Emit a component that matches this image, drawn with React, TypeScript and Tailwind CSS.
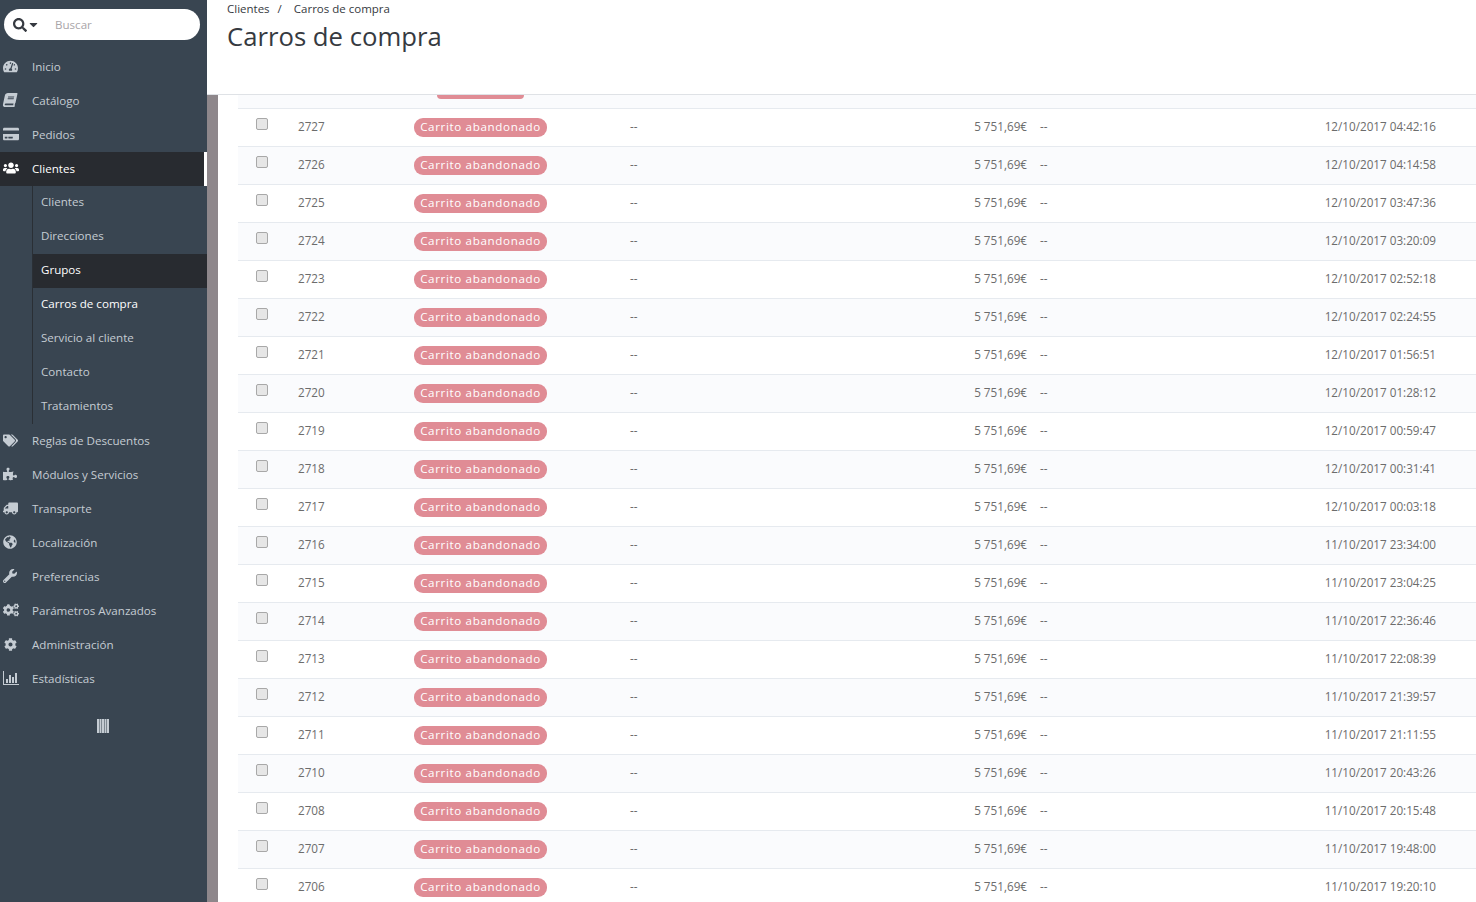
import {
  FaTachometerAlt,
  FaBook,
  FaCreditCard,
  FaUsers,
  FaTags,
  FaPuzzlePiece,
  FaTruck,
  FaGlobeAmericas,
  FaWrench,
  FaCogs,
  FaCog,
  FaSearch,
  FaCaretDown,
} from "react-icons/fa"
import type { IconType } from "react-icons"

const topItems: { label: string; icon: IconType; iconClass?: string }[] = [
  { label: "Inicio", icon: FaTachometerAlt, iconClass: "size-[15px]" },
  { label: "Catálogo", icon: FaBook, iconClass: "size-[14px] -skew-x-12" },
  { label: "Pedidos", icon: FaCreditCard, iconClass: "size-[16px]" },
]

const subItems = ["Clientes", "Direcciones", "Grupos", "Carros de compra", "Servicio al cliente", "Contacto", "Tratamientos"]

const bottomItems: { label: string; icon: IconType | typeof ChartIcon; iconClass?: string }[] = [
  { label: "Reglas de Descuentos", icon: FaTags, iconClass: "size-[15px]" },
  { label: "Módulos y Servicios", icon: FaPuzzlePiece, iconClass: "size-[14px]" },
  { label: "Transporte", icon: FaTruck, iconClass: "size-[15px] -scale-x-100" },
  { label: "Localización", icon: FaGlobeAmericas, iconClass: "size-[14px]" },
  { label: "Preferencias", icon: FaWrench, iconClass: "size-[14px]" },
  { label: "Parámetros Avanzados", icon: FaCogs, iconClass: "size-[16px]" },
  { label: "Administración", icon: FaCog, iconClass: "size-[13px] ml-[1px]" },
  { label: "Estadísticas", icon: ChartIcon, iconClass: "size-[16px]" },
]

const rows = [
  ["2727", "12/10/2017 04:42:16"],
  ["2726", "12/10/2017 04:14:58"],
  ["2725", "12/10/2017 03:47:36"],
  ["2724", "12/10/2017 03:20:09"],
  ["2723", "12/10/2017 02:52:18"],
  ["2722", "12/10/2017 02:24:55"],
  ["2721", "12/10/2017 01:56:51"],
  ["2720", "12/10/2017 01:28:12"],
  ["2719", "12/10/2017 00:59:47"],
  ["2718", "12/10/2017 00:31:41"],
  ["2717", "12/10/2017 00:03:18"],
  ["2716", "11/10/2017 23:34:00"],
  ["2715", "11/10/2017 23:04:25"],
  ["2714", "11/10/2017 22:36:46"],
  ["2713", "11/10/2017 22:08:39"],
  ["2712", "11/10/2017 21:39:57"],
  ["2711", "11/10/2017 21:11:55"],
  ["2710", "11/10/2017 20:43:26"],
  ["2708", "11/10/2017 20:15:48"],
  ["2707", "11/10/2017 19:48:00"],
  ["2706", "11/10/2017 19:20:10"],
]

function ChartIcon({ className }: { className?: string }) {
  return (
    <svg viewBox="0 0 16 14" fill="currentColor" className={className}>
      <path d="M0 0h1v13h15v1H0z" />
      <path d="M3 8h2v4H3zM6 4h2v8H6zM9 6h2v6H9zM12 2h2v10h-2z" />
    </svg>
  )
}

function CollapseIcon() {
  return (
    <svg viewBox="0 0 12 14" fill="currentColor" className="h-[14px] w-[12px] text-[#c5ccd3]">
      <path d="M0 0h2v14H0zM2.5 0h2v14h-2zM5 0h2v14H5zM7.5 0h2v14h-2zM10 0h2v14h-2z" />
    </svg>
  )
}

function NavItem({
  label,
  icon: Icon,
  iconClass,
}: {
  label: string
  icon: IconType | typeof ChartIcon
  iconClass?: string
}) {
  return (
    <div className="flex h-[34px] items-center text-[#c5ccd3]">
      <span className="mb-[2px] flex w-[32px] justify-start pl-[3px]">
        <Icon className={iconClass} />
      </span>
      <span>{label}</span>
    </div>
  )
}

function Sidebar() {
  return (
    <aside className="flex w-[207px] shrink-0 flex-col bg-[#394551] pt-[9px] text-[11.6px]">
      <div className="mx-[4px] mb-[10px] flex h-[31px] w-[196px] items-center rounded-full bg-white">
        <FaSearch className="ml-[9px] size-[14px] text-[#363a41]" />
        <FaCaretDown className="size-[13px] text-[#363a41]" />
        <span className="ml-[15px] text-[#a9a5a9]">Buscar</span>
      </div>

      {topItems.map((item) => (
        <NavItem key={item.label} {...item} />
      ))}

      <div className="flex h-[34px] items-center border-r-[3px] border-white bg-[#282b30] text-white">
        <span className="mb-[2px] flex w-[32px] justify-start pl-[3px]">
          <FaUsers className="h-[18px] w-[16px]" />
        </span>
        <span>Clientes</span>
      </div>

      <div className="ml-[32px] border-l border-[#2a2f35]">
        {subItems.map((label) => (
          <div
            key={label}
            className={
              label === "Grupos"
                ? "flex h-[34px] items-center bg-[#282b30] pb-[2px] pl-[8px] text-white"
                : label === "Carros de compra"
                  ? "flex h-[34px] items-center pb-[2px] pl-[8px] text-white"
                  : "flex h-[34px] items-center pb-[2px] pl-[8px] text-[#c5ccd3]"
            }
          >
            {label}
          </div>
        ))}
      </div>

      {bottomItems.map((item) => (
        <NavItem key={item.label} {...item} />
      ))}

      <div className="mt-[23px] flex justify-center pr-[2px]">
        <CollapseIcon />
      </div>
    </aside>
  )
}

function Badge() {
  return (
    <span className="inline-flex h-[19px] w-[133px] items-center justify-center rounded-[9px] bg-[#e08c95] pb-[2px] text-[11.6px] font-medium tracking-[0.65px] text-white">
      Carrito abandonado
    </span>
  )
}

function Row({ id, date, striped }: { id: string; date: string; striped: boolean }) {
  return (
    <div
      className={
        striped
          ? "flex h-[38px] items-center border-b border-[#e6eaef] bg-[#fafbfd]"
          : "flex h-[38px] items-center border-b border-[#e6eaef] bg-white"
      }
    >
      <span className="mb-[8px] ml-[18px] size-[12px] rounded-[2px] border border-[#a8a8a8] bg-[#e6e6e6]" />
      <span className="mb-[1px] ml-[30px] w-[116px]">{id}</span>
      <Badge />
      <span className="mb-[1px] ml-[83px] w-[100px]">--</span>
      <span className="mb-[1px] ml-[197px] w-[100px] text-right">5 751,69€</span>
      <span className="mb-[1px] ml-[13px]">--</span>
      <span className="mb-[1px] ml-auto mr-[40px]">{date}</span>
    </div>
  )
}

export default function App() {
  return (
    <div className="flex h-[902px] overflow-hidden bg-white font-['Open_Sans',sans-serif]">
      <Sidebar />
      <main className="flex min-w-0 flex-1 flex-col">
        <header className="h-[95px] shrink-0 border-b border-[#dfe2e6] bg-white pl-[20px]">
          <div className="flex h-[17px] items-center text-[11.5px] text-[#363a41]">
            <span>Clientes</span>
            <span className="ml-[8px] mr-[12px]">/</span>
            <span>Carros de compra</span>
          </div>
          <h1 className="mt-[2px] text-[25.7px] leading-[36px] text-[#363a41]">Carros de compra</h1>
        </header>
        <div className="flex min-h-0 flex-1">
          <div className="w-[11px] shrink-0 bg-[#8e878b]" />
          <div className="min-w-0 flex-1 pl-[20px] text-[11.7px] text-[#6c6c6c]">
            <div className="h-[14px] overflow-hidden border-b border-[#e6eaef] bg-[#fafbfd]">
              <div className="ml-[199px] h-[4px] w-[87px] rounded-b-[9px] bg-[#e08c95]" />
            </div>
            {rows.map(([id, date], i) => (
              <Row key={id} id={id} date={date} striped={i % 2 === 1} />
            ))}
          </div>
        </div>
      </main>
    </div>
  )
}
